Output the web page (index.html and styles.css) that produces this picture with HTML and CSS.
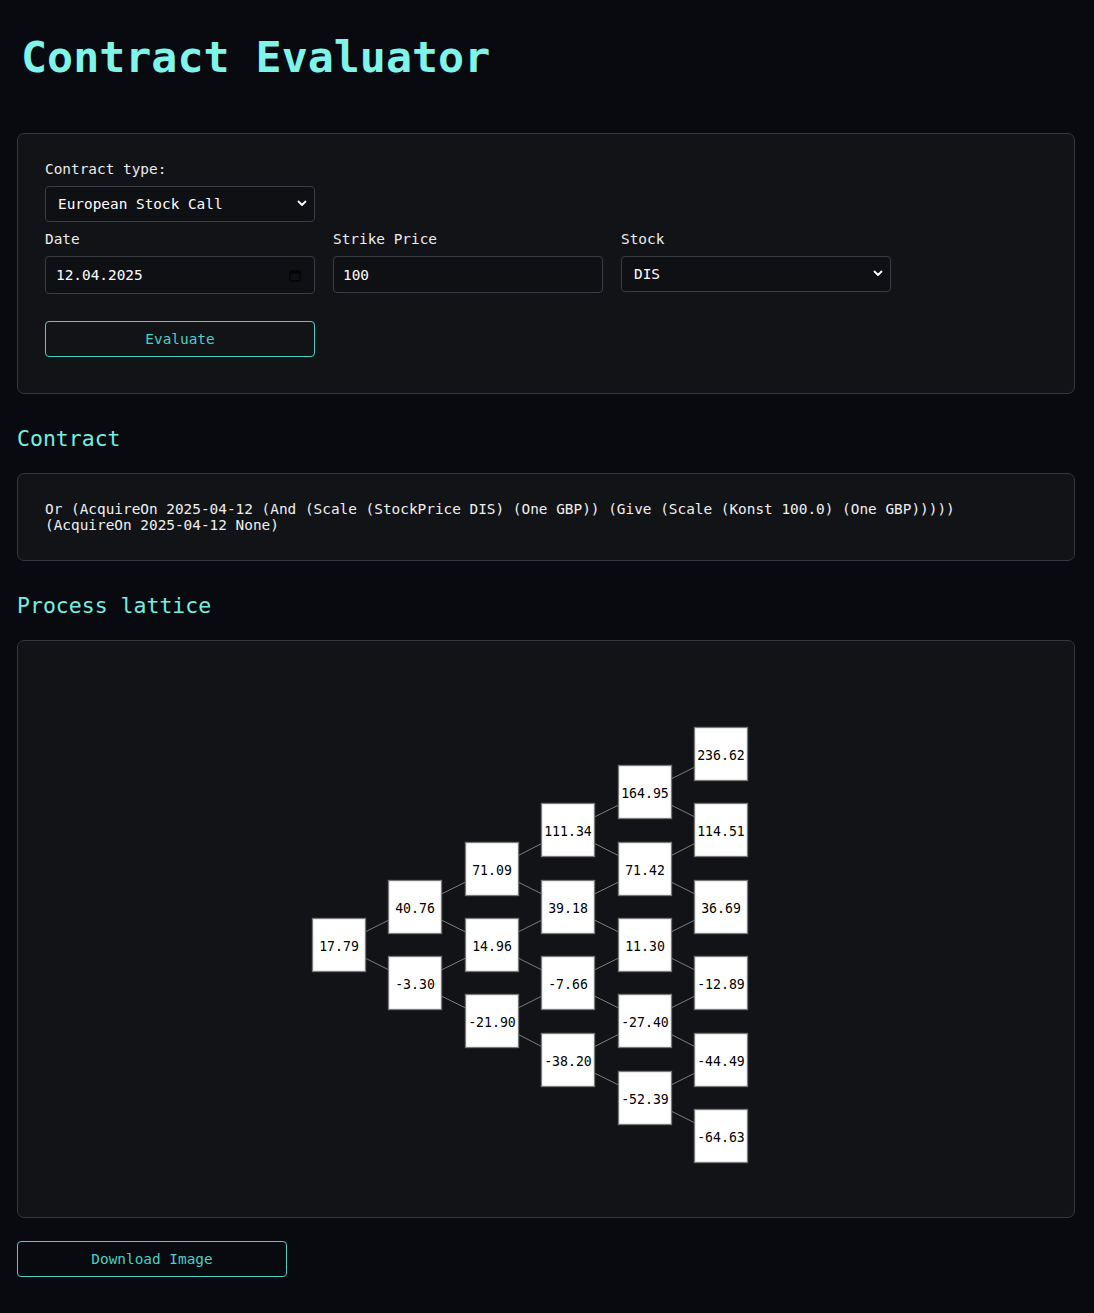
FILE: index.html
```html
<!DOCTYPE html>
<html lang="en">
<head>
<meta charset="utf-8">
<title>Contract Evaluator</title>
<link rel="stylesheet" href="styles.css">
</head>
<body>
<main class="container">
  <h1 class="title">Contract Evaluator</h1>

  <section class="panel form-panel">
    <label class="label">Contract type:</label>
    <div class="select-wrap type-select">
      <select class="control select">
        <option>European Stock Call</option>
      </select>
      <svg class="chevron" width="10" height="7" viewBox="0 0 10 7"><path d="M1.5 1.5 L5 5 L8.5 1.5" fill="none" stroke="#ffffff" stroke-width="1.8" stroke-linecap="round" stroke-linejoin="round"/></svg>
    </div>

    <div class="fields">
      <div class="field">
        <label class="label">Date</label>
        <div class="control date-control">
          <span>12.04.2025</span>
          <svg class="cal" width="12" height="13" viewBox="0 0 12 13"><rect x="1" y="2" width="10" height="10" rx="1" fill="none" stroke="#050505" stroke-width="1.4"/><rect x="1" y="2" width="10" height="2.5" fill="#050505"/></svg>
        </div>
      </div>
      <div class="field">
        <label class="label">Strike Price</label>
        <input class="control text-input" type="text" value="100">
      </div>
      <div class="field">
        <label class="label">Stock</label>
        <div class="select-wrap">
          <select class="control select">
            <option>DIS</option>
          </select>
          <svg class="chevron" width="10" height="7" viewBox="0 0 10 7"><path d="M1.5 1.5 L5 5 L8.5 1.5" fill="none" stroke="#ffffff" stroke-width="1.8" stroke-linecap="round" stroke-linejoin="round"/></svg>
        </div>
      </div>
    </div>

    <button class="btn evaluate">Evaluate</button>
  </section>

  <h2 class="heading">Contract</h2>
  <section class="panel contract-panel">
<pre class="contract-text">Or (AcquireOn 2025-04-12 (And (Scale (StockPrice DIS) (One GBP)) (Give (Scale (Konst 100.0) (One GBP)))))
(AcquireOn 2025-04-12 None)</pre>
  </section>

  <h2 class="heading">Process lattice</h2>
  <section class="panel lattice-panel">
    <svg class="lattice" width="1002" height="522" viewBox="0 0 1002 522">
      <path class="edges" d="
        M294 277 L370 239 M294 277 L370 315
        M370 239 L447 201 M370 239 L447 277 M370 315 L447 277 M370 315 L447 353
        M447 201 L523 162 M447 201 L523 239 M447 277 L523 239 M447 277 L523 315 M447 353 L523 315 M447 353 L523 392
        M523 162 L600 124 M523 162 L600 201 M523 239 L600 201 M523 239 L600 277 M523 315 L600 277 M523 315 L600 353 M523 392 L600 353 M523 392 L600 430
        M600 124 L676 86 M600 124 L676 162 M600 201 L676 162 M600 201 L676 239 M600 277 L676 239 M600 277 L676 315 M600 353 L676 315 M600 353 L676 392 M600 430 L676 392 M600 430 L676 468"/>
      <g class="nodes">
        <rect x="267.5" y="250.5" width="53" height="53"/>
        <rect x="343.5" y="212.5" width="53" height="53"/>
        <rect x="343.5" y="288.5" width="53" height="53"/>
        <rect x="420.5" y="174.5" width="53" height="53"/>
        <rect x="420.5" y="250.5" width="53" height="53"/>
        <rect x="420.5" y="326.5" width="53" height="53"/>
        <rect x="496.5" y="135.5" width="53" height="53"/>
        <rect x="496.5" y="212.5" width="53" height="53"/>
        <rect x="496.5" y="288.5" width="53" height="53"/>
        <rect x="496.5" y="365.5" width="53" height="53"/>
        <rect x="573.5" y="97.5" width="53" height="53"/>
        <rect x="573.5" y="174.5" width="53" height="53"/>
        <rect x="573.5" y="250.5" width="53" height="53"/>
        <rect x="573.5" y="326.5" width="53" height="53"/>
        <rect x="573.5" y="403.5" width="53" height="53"/>
        <rect x="649.5" y="59.5" width="53" height="53"/>
        <rect x="649.5" y="135.5" width="53" height="53"/>
        <rect x="649.5" y="212.5" width="53" height="53"/>
        <rect x="649.5" y="288.5" width="53" height="53"/>
        <rect x="649.5" y="365.5" width="53" height="53"/>
        <rect x="649.5" y="441.5" width="53" height="53"/>
      </g>
      <g class="labels">
        <text x="294" y="278">17.79</text>
        <text x="370" y="240">40.76</text>
        <text x="370" y="316">-3.30</text>
        <text x="447" y="202">71.09</text>
        <text x="447" y="278">14.96</text>
        <text x="447" y="354">-21.90</text>
        <text x="523" y="163">111.34</text>
        <text x="523" y="240">39.18</text>
        <text x="523" y="316">-7.66</text>
        <text x="523" y="393">-38.20</text>
        <text x="600" y="125">164.95</text>
        <text x="600" y="202">71.42</text>
        <text x="600" y="278">11.30</text>
        <text x="600" y="354">-27.40</text>
        <text x="600" y="431">-52.39</text>
        <text x="676" y="87">236.62</text>
        <text x="676" y="163">114.51</text>
        <text x="676" y="240">36.69</text>
        <text x="676" y="316">-12.89</text>
        <text x="676" y="393">-44.49</text>
        <text x="676" y="469">-64.63</text>
      </g>
    </svg>
  </section>

  <button class="btn download">Download Image</button>
</main>
</body>
</html>
```

FILE: styles.css
```css
* {
  box-sizing: border-box;
}

html, body {
  margin: 0;
  padding: 0;
  background: #080a0f;
}

body {
  font-family: "DejaVu Sans Mono", "Liberation Mono", monospace;
  color: #e8e8e8;
  font-size: 14.4px;
}

.container {
  padding: 0 19px 40px 17px;
}

.title {
  margin: 32px 0 51px 4px;
  font-size: 43.3px;
  font-weight: bold;
  color: #7ff5ea;
  line-height: normal;
}

.panel {
  background: #121317;
  border: 1px solid #34373d;
  border-radius: 7px;
  padding: 27px;
}

.form-panel {
  padding-bottom: 36px;
}

.label {
  display: block;
  font-size: 14.4px;
  line-height: 16px;
  color: #ececec;
  margin-bottom: 9px;
}

.select-wrap {
  position: relative;
  width: 270px;
}

.type-select {
  margin-bottom: 9px;
}

.control {
  display: block;
  width: 270px;
  background: #0f1014;
  border: 1px solid #3a3d43;
  border-radius: 4px;
  color: #ffffff;
  font-family: "DejaVu Sans Mono", "Liberation Mono", monospace;
  font-size: 14.4px;
  margin: 0;
  outline: none;
}

.select {
  appearance: none;
  -webkit-appearance: none;
  height: 36px;
  padding: 0 12px;
}

.chevron {
  position: absolute;
  right: 8px;
  top: 14px;
}

.date-control {
  height: 38px;
  padding: 0 13px 0 10px;
  display: flex;
  align-items: center;
  justify-content: space-between;
}

.text-input {
  height: 37px;
  padding: 0 9px;
}

.fields {
  display: grid;
  grid-template-columns: 270px 270px 270px;
  column-gap: 18px;
  margin-bottom: 27px;
}

.btn {
  display: block;
  width: 270px;
  height: 36px;
  background: transparent;
  border: 1px solid #4ccfc4;
  border-radius: 4px;
  color: #4ccfc4;
  font-family: "DejaVu Sans Mono", "Liberation Mono", monospace;
  font-size: 14.4px;
  padding: 0;
  cursor: pointer;
}

.heading {
  margin: 32px 0 22px 0;
  font-size: 21.5px;
  font-weight: normal;
  color: #72efe2;
  line-height: normal;
}

.contract-text {
  margin: 0;
  font-family: "DejaVu Sans Mono", "Liberation Mono", monospace;
  font-size: 14.4px;
  line-height: 16px;
  color: #f0f0f0;
  white-space: pre-wrap;
}

.lattice {
  display: block;
}

.edges {
  fill: none;
  stroke: #7d7d7d;
  stroke-width: 1;
}

.nodes rect {
  fill: #ffffff;
  stroke: #7a7a7a;
  stroke-width: 1.3;
}

.labels text {
  font-family: "DejaVu Sans Mono", "Liberation Mono", monospace;
  font-size: 13.2px;
  fill: #000000;
  text-anchor: middle;
  dominant-baseline: central;
}

.download {
  margin-top: 23px;
}
```
